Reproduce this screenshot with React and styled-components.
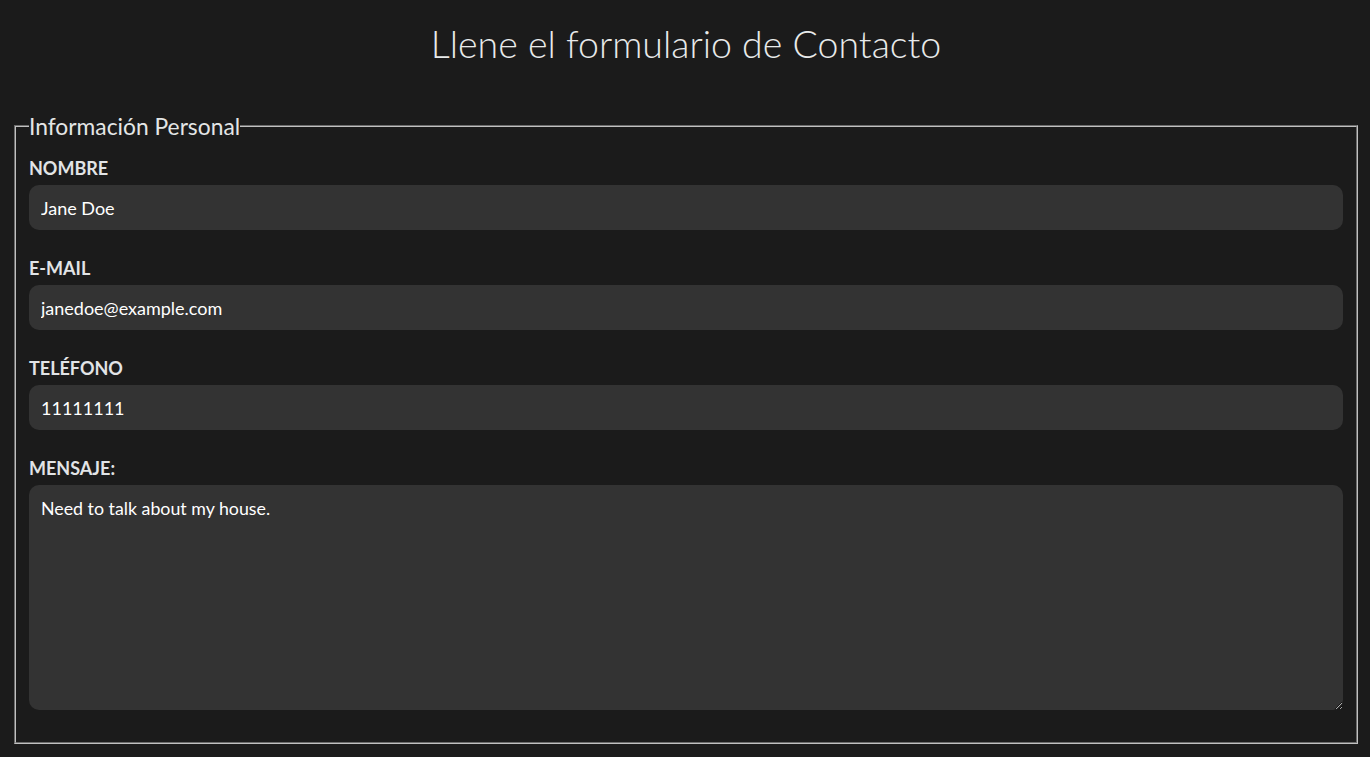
import React, { useState } from "react";
import styled, { createGlobalStyle } from "styled-components";

const GlobalStyle = createGlobalStyle`
  html, body {
    margin: 0;
    padding: 0;
    background-color: #1b1b1b;
  }
  body {
    font-family: Lato, "Noto Sans", "Liberation Sans", sans-serif;
    color: #e6e6e6;
  }
`;

const Page = styled.div`
  min-height: 757px;
  box-sizing: border-box;
  padding: 19px 12px 0 14px;
`;

const Title = styled.h1`
  margin: 0 0 44px;
  font-size: 37.5px;
  font-weight: 300;
  line-height: 50px;
  text-align: center;
  color: #e8eaea;
`;

const Fieldset = styled.fieldset`
  margin: 0;
  min-width: 0;
  border: 2px groove rgb(192, 192, 192);
  padding: 17px 13px 32px 13px;
`;

const Legend = styled.legend`
  padding: 0;
  font-size: 22.8px;
  line-height: 26px;
  color: #e4e6e6;
`;

const Field = styled.div`
  display: flex;
  flex-direction: column;
  margin-bottom: ${(p) => (p.last ? "0" : "26px")};
`;

const Label = styled.label`
  display: block;
  font-size: 18px;
  font-weight: 700;
  line-height: 24px;
  margin-bottom: 5px;
  color: #e2e4e6;
`;

const Input = styled.input`
  box-sizing: border-box;
  width: 100%;
  height: 45px;
  padding: 0 12px;
  border: none;
  border-radius: 10px;
  background-color: #333333;
  color: #ffffff;
  font-family: inherit;
  font-size: 18px;
  outline: none;
`;

const TextArea = styled.textarea`
  display: block;
  box-sizing: border-box;
  width: 100%;
  height: 225px;
  padding: 12px 12px;
  border: none;
  border-radius: 10px;
  background-color: #333333;
  color: #ffffff;
  font-family: inherit;
  font-size: 17.8px;
  line-height: normal;
  outline: none;
`;

const App = () => {
  const [form, setForm] = useState({
    nombre: "Jane Doe",
    email: "janedoe@example.com",
    telefono: "11111111",
    mensaje: "Need to talk about my house.",
  });

  const onChange = (e) =>
    setForm({ ...form, [e.target.name]: e.target.value });

  return (
    <Page>
      <GlobalStyle />
      <Title>Llene el formulario de Contacto</Title>
      <form onSubmit={(e) => e.preventDefault()}>
        <Fieldset>
          <Legend>Información Personal</Legend>
          <Field>
            <Label htmlFor="nombre">NOMBRE</Label>
            <Input id="nombre" name="nombre" value={form.nombre} onChange={onChange} />
          </Field>
          <Field>
            <Label htmlFor="email">E-MAIL</Label>
            <Input id="email" name="email" type="email" value={form.email} onChange={onChange} />
          </Field>
          <Field>
            <Label htmlFor="telefono">TELÉFONO</Label>
            <Input id="telefono" name="telefono" type="tel" value={form.telefono} onChange={onChange} />
          </Field>
          <Field last>
            <Label htmlFor="mensaje">MENSAJE:</Label>
            <TextArea id="mensaje" name="mensaje" value={form.mensaje} onChange={onChange} />
          </Field>
        </Fieldset>
      </form>
    </Page>
  );
};

export default App;
